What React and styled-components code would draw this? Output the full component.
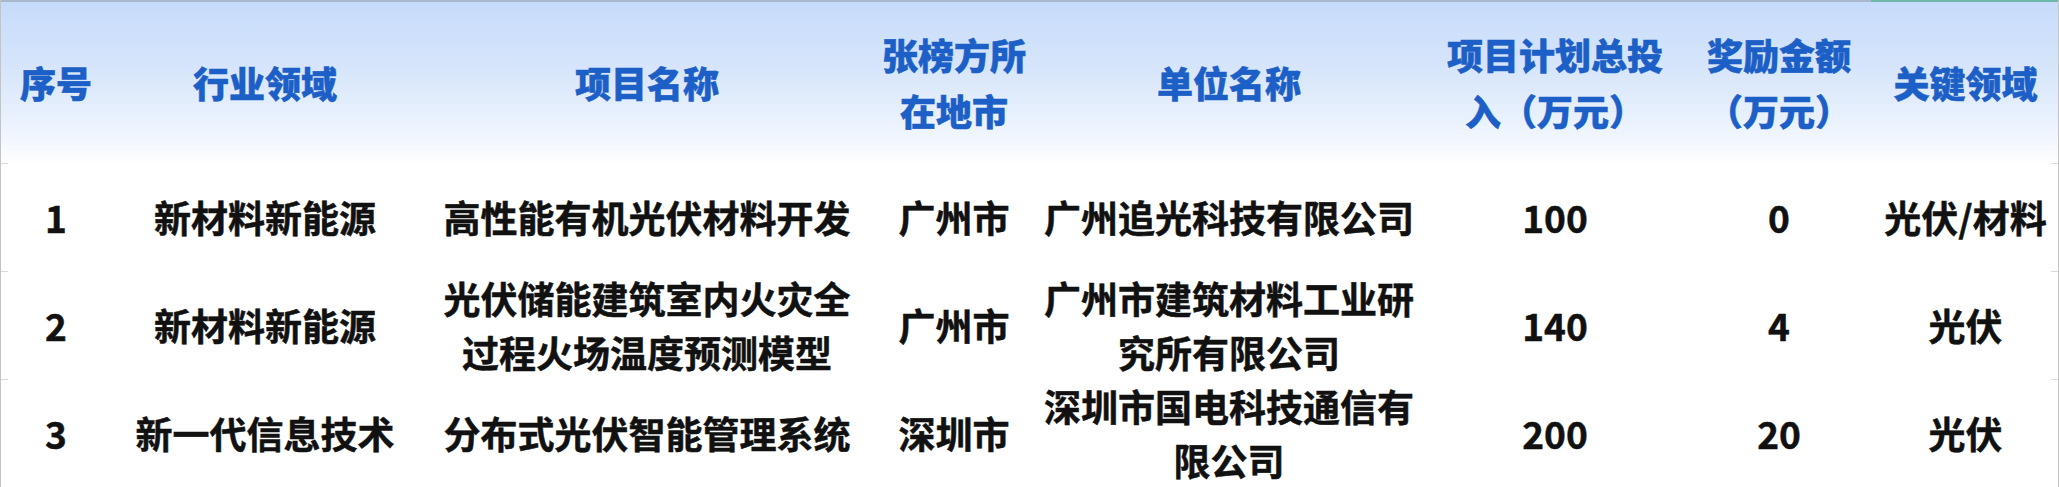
import React from "react";
import styled, { createGlobalStyle } from "styled-components";

const GlobalStyle = createGlobalStyle`
  html, body { margin: 0; padding: 0; background: #ffffff; }
  body { font-family: "Noto Sans CJK SC", "Microsoft YaHei", sans-serif; }
`;

const COLS = "110px 308px 456px 158px 392px 260px 188px 185px";

const Table = styled.div`
  width: 2059px; height: 487px; box-sizing: border-box;
  border-left: 1px solid #c4c4c4; border-right: 1px solid #c4c4c4;
  background: #ffffff; overflow: hidden;
`;

const TopRule = styled.div`
  height: 2px;
  background: linear-gradient(to right, #a9b8cc 0, #a9b8cc 1870px, #6fb7a8 1870px);
`;

const HeadRow = styled.div`
  display: grid; grid-template-columns: ${COLS};
  height: 161px;
  background: linear-gradient(180deg, #c6dbfa 0%, #d6e5fb 40%, #eaf2fd 75%, #fdfeff 100%);
`;

const Row = styled.div`
  display: grid; grid-template-columns: ${COLS};
  height: 108px; position: relative;
  &::before, &::after {
    content: ""; position: absolute; top: 0;
    width: 7px; height: 1px; background: #dadada;
  }
  &::before { left: 0; }
  &::after { right: 0; }
`;

const Cell = styled.div`
  display: flex; align-items: center; justify-content: center;
  text-align: center; white-space: nowrap;
`;

const HeadCell = styled(Cell)`
  color: #1c5fc6; font-size: 36px; font-weight: 900;
  line-height: 56px; padding-bottom: 2px;
  -webkit-text-stroke: 0.5px #1c5fc6;
`;

const BodyCell = styled(Cell)`
  color: #111111; font-size: 37px; font-weight: 700;
  line-height: 54px;
  -webkit-text-stroke: 0.5px #111111;
`;

const Lines = ({ text }) =>
  text.split("\n").map((t, i, a) => (
    <React.Fragment key={i}>
      {t}
      {i < a.length - 1 && <br />}
    </React.Fragment>
  ));

const headers = [
  "序号", "行业领域", "项目名称", "张榜方所\n在地市", "单位名称",
  "项目计划总投\n入（万元）", "奖励金额\n（万元）", "关键领域",
];

const rows = [
  ["1", "新材料新能源", "高性能有机光伏材料开发", "广州市", "广州追光科技有限公司", "100", "0", "光伏/材料"],
  ["2", "新材料新能源", "光伏储能建筑室内火灾全\n过程火场温度预测模型", "广州市", "广州市建筑材料工业研\n究所有限公司", "140", "4", "光伏"],
  ["3", "新一代信息技术", "分布式光伏智能管理系统", "深圳市", "深圳市国电科技通信有\n限公司", "200", "20", "光伏"],
];

export default function App() {
  return (
    <>
      <GlobalStyle />
      <Table>
        <TopRule />
        <HeadRow>
          {headers.map((h) => (
            <HeadCell key={h}>
              <div><Lines text={h} /></div>
            </HeadCell>
          ))}
        </HeadRow>
        {rows.map((r) => (
          <Row key={r[0]}>
            {r.map((c, i) => (
              <BodyCell key={i}>
                <div><Lines text={c} /></div>
              </BodyCell>
            ))}
          </Row>
        ))}
      </Table>
    </>
  );
}
